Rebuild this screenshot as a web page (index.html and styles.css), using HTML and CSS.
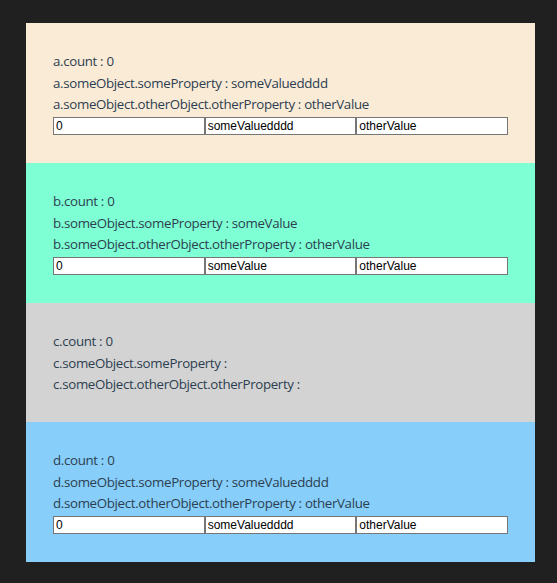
FILE: index.html
```html
<!DOCTYPE html>
<html lang="en">
<head>
<meta charset="utf-8">
<title>Reactive objects</title>
<link rel="stylesheet" href="styles.css">
</head>
<body>
<div class="app">
  <section class="panel panel-a">
    <div class="line">a.count : 0</div>
    <div class="line">a.someObject.someProperty : someValuedddd</div>
    <div class="line">a.someObject.otherObject.otherProperty : otherValue</div>
    <div class="inputs">
      <input class="field" type="text" value="0">
      <input class="field" type="text" value="someValuedddd">
      <input class="field" type="text" value="otherValue">
    </div>
  </section>
  <section class="panel panel-b">
    <div class="line">b.count : 0</div>
    <div class="line">b.someObject.someProperty : someValue</div>
    <div class="line">b.someObject.otherObject.otherProperty : otherValue</div>
    <div class="inputs">
      <input class="field" type="text" value="0">
      <input class="field" type="text" value="someValue">
      <input class="field" type="text" value="otherValue">
    </div>
  </section>
  <section class="panel panel-c">
    <div class="line">c.count : 0</div>
    <div class="line">c.someObject.someProperty : </div>
    <div class="line">c.someObject.otherObject.otherProperty : </div>
  </section>
  <section class="panel panel-d">
    <div class="line">d.count : 0</div>
    <div class="line">d.someObject.someProperty : someValuedddd</div>
    <div class="line">d.someObject.otherObject.otherProperty : otherValue</div>
    <div class="inputs">
      <input class="field" type="text" value="0">
      <input class="field" type="text" value="someValuedddd">
      <input class="field" type="text" value="otherValue">
    </div>
  </section>
</div>
</body>
</html>
```
FILE: styles.css
```css
html, body {
  margin: 0;
  padding: 0;
  background: #202020;
}

body {
  padding: 23px 0 20px 26px;
}

.app {
  width: 509px;
  font-family: "Open Sans", "Noto Sans", sans-serif;
  font-size: 13.3px;
  letter-spacing: -0.33px;
  color: #2c3e50;
}

.panel {
  padding: 27px;
}

.panel-a { background: #faebd7; }
.panel-b { background: #7fffd4; }
.panel-c { background: #d3d3d3; }
.panel-d { background: #87cefa; }

.line {
  line-height: 21.67px;
  padding-top: 1px;
  margin-bottom: -1px;
  white-space: pre;
}

.inputs {
  display: flex;
  margin-top: 2px;
  padding-bottom: 1px;
}

.field {
  flex: 1 1 0;
  min-width: 0;
  box-sizing: border-box;
  height: 18px;
  margin: 0;
  padding: 0 2px;
  border: 1px solid #767676;
  background: #fff;
  font-family: "Liberation Sans", Arial, sans-serif;
  font-size: 12px;
  letter-spacing: normal;
  color: #000;
  outline: none;
}
```
